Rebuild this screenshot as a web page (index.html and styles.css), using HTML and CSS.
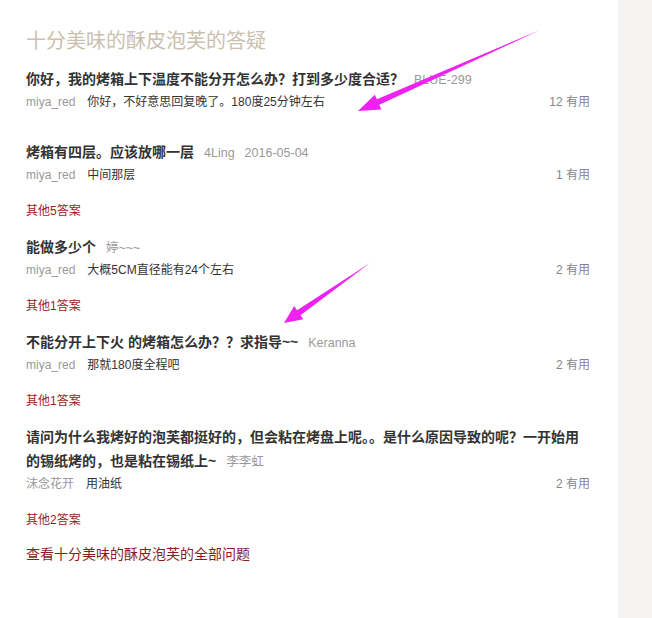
FILE: index.html
```html
<!DOCTYPE html>
<html>
<head>
  <title>十分美味的酥皮泡芙的答疑</title>
  <meta charset="UTF-8">
  <link rel="stylesheet" href="styles.css">
</head>
<body>
  <div class="page">
    <div class="main">
      <h1>十分美味的酥皮泡芙的答疑</h1>

      <div class="item">
        <div class="question">你好，我的烤箱上下温度不能分开怎么办？打到多少度合适？<span class="asker">BLUE-299</span></div>
        <div class="answer">
          <span class="replier">miya_red</span>
          <span class="reply">你好，不好意思回复晚了。180度25分钟左右</span>
          <span class="useful">12 有用</span>
        </div>
      </div>

      <div class="item">
        <div class="question">烤箱有四层。应该放哪一层<span class="asker">4Ling</span><span class="asker">2016-05-04</span></div>
        <div class="answer">
          <span class="replier">miya_red</span>
          <span class="reply">中间那层</span>
          <span class="useful">1 有用</span>
        </div>
        <a class="more" href="#">其他5答案</a>
      </div>

      <div class="item">
        <div class="question">能做多少个<span class="asker">婷~~~</span></div>
        <div class="answer">
          <span class="replier">miya_red</span>
          <span class="reply">大概5CM直径能有24个左右</span>
          <span class="useful">2 有用</span>
        </div>
        <a class="more" href="#">其他1答案</a>
      </div>

      <div class="item">
        <div class="question">不能分开上下火 的烤箱怎么办？？求指导~~<span class="asker">Keranna</span></div>
        <div class="answer">
          <span class="replier">miya_red</span>
          <span class="reply">那就180度全程吧</span>
          <span class="useful">2 有用</span>
        </div>
        <a class="more" href="#">其他1答案</a>
      </div>

      <div class="item">
        <div class="question">请问为什么我烤好的泡芙都挺好的，但会粘在烤盘上呢。。是什么原因导致的呢？一开始用的锡纸烤的，也是粘在锡纸上~<span class="asker">李李虹</span></div>
        <div class="answer">
          <span class="replier">沫念花开</span>
          <span class="reply">用油纸</span>
          <span class="useful">2 有用</span>
        </div>
        <a class="more" href="#">其他2答案</a>
      </div>

      <a class="all-link" href="#">查看十分美味的酥皮泡芙的全部问题</a>
    </div>
    <div class="side"></div>
  </div>

  <svg class="marks" width="652" height="618" viewBox="0 0 652 618">
    <polygon points="540,30 379.3,104.8 381.4,109.4 358,111 374.8,94.7 376.9,99.3" />
    <polygon points="370,263 300.5,315.2 303.4,319.3 284,323 294.2,306.1 297.1,310.2" />
  </svg>
</body>
</html>
```

FILE: styles.css
```css
body {
  margin: 0;
  font-family: "Liberation Sans", Arial, "Noto Sans CJK SC", sans-serif;
  background-color: #fff;
  color: #333;
}

.page {
  display: flex;
  min-height: 618px;
}

.main {
  width: 564px;
  padding: 26px 28px 0 26px;
}

.side {
  flex: 1;
  background-color: #f4f3f1;
}

h1 {
  margin: 0 0 11px 0;
  font-size: 20px;
  line-height: 30px;
  font-weight: normal;
  color: #cbc0ae;
}

.item {
  margin-bottom: 14px;
}

.question {
  font-size: 14px;
  line-height: 24px;
  font-weight: 600;
  color: #333;
}

.asker {
  margin-left: 10px;
  font-size: 12.5px;
  line-height: 1;
  font-weight: normal;
  color: #999;
}

.answer {
  display: flex;
  font-size: 12px;
  line-height: 22px;
  padding-bottom: 13px;
}

.replier {
  color: #999;
  margin-right: 12px;
}

.reply {
  flex: 1;
  color: #333;
}

.useful {
  color: #888;
}

.more {
  display: block;
  margin-top: 2px;
  font-size: 12px;
  line-height: 20px;
  color: #9b1c1c;
  text-decoration: none;
}

.all-link {
  display: block;
  margin-top: 2px;
  font-size: 14px;
  line-height: 20px;
  color: #8b1a1a;
  text-decoration: none;
}

.marks {
  position: absolute;
  left: 0;
  top: 0;
  pointer-events: none;
}

.marks polygon {
  fill: #ef22ef;
}
```
